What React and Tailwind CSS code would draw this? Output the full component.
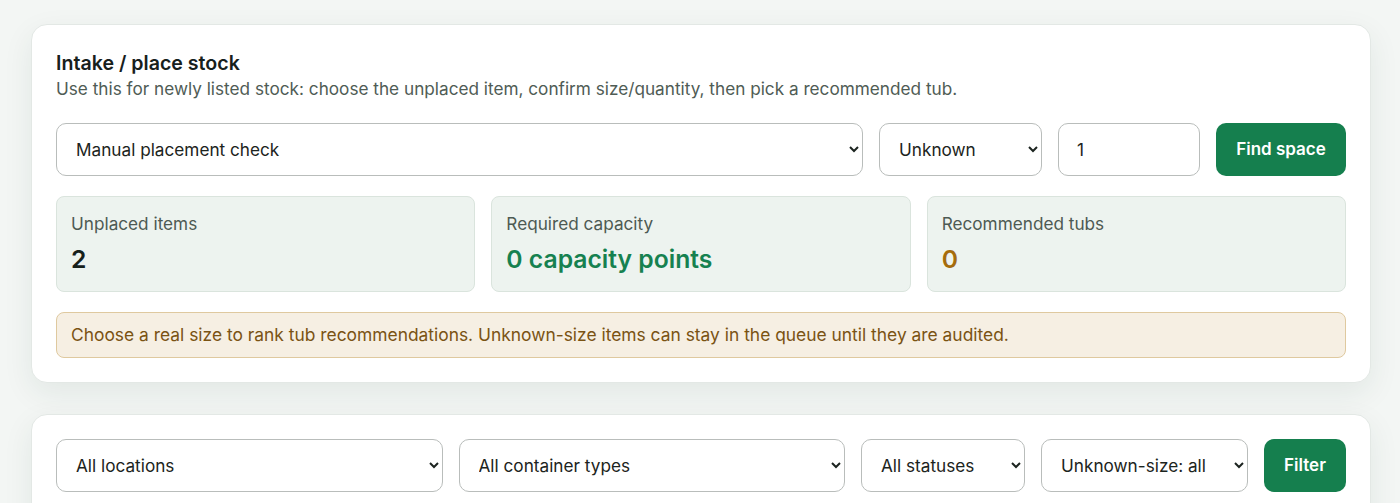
import React from 'react';

const fieldCls =
  "h-[53px] rounded-[10px] border border-[#b9bdbb] bg-white px-[15px] text-[17.2px] text-[#1c2420] outline-none";

const Stat = ({ label, value, valueCls }) => (
  <div className="flex-1 rounded-lg border border-[#dae4dd] bg-[#edf3ef] px-[14px] pt-[15px] pb-4">
    <div className="text-[17.2px] leading-6 text-[#4d5a53]">{label}</div>
    <div className={`mt-[7px] text-[24.7px] leading-8 font-semibold ${valueCls}`}>{value}</div>
  </div>
);

export default function App() {
  return (
    <div
      className="h-[503px] overflow-hidden bg-[#f3f6f4] pl-[31px] pr-[29px] pt-6"
      style={{ fontFamily: 'Inter, "Noto Sans", sans-serif' }}
    >
      {/* Intake card */}
      <section className="rounded-2xl border border-[#e3e8e5] bg-white p-6 shadow-[0_10px_30px_rgba(30,60,45,0.08)]">
        <h2 className="text-[19.6px] leading-7 font-semibold text-[#17201c]">Intake / place stock</h2>
        <p className="text-[17.2px] leading-6 text-[#4f5c55]">
          Use this for newly listed stock: choose the unplaced item, confirm size/quantity, then pick a recommended tub.
        </p>

        <div className="mt-[22px] flex gap-4">
          <select className={`${fieldCls} flex-1`} defaultValue="manual">
            <option value="manual">Manual placement check</option>
          </select>
          <select className={`${fieldCls} w-[163px]`} defaultValue="unknown">
            <option value="unknown">Unknown</option>
          </select>
          <input className={`${fieldCls} w-[142px] px-[18px]`} defaultValue="1" />
          <button className="h-[53px] w-[130px] rounded-[10px] bg-[#157f4e] text-[17px] font-semibold text-white">
            Find space
          </button>
        </div>

        <div className="mt-5 flex gap-4">
          <Stat label="Unplaced items" value="2" valueCls="text-[#16201b]" />
          <Stat label="Required capacity" value="0 capacity points" valueCls="text-[#168150]" />
          <Stat label="Recommended tubs" value="0" valueCls="text-[#a56c0c]" />
        </div>

        <div className="mt-5 rounded-lg border border-[#dfc99f] bg-[#f6efe3] px-[14px] py-[10px] text-[17.4px] leading-6 text-[#7a5313]">
          Choose a real size to rank tub recommendations. Unknown-size items can stay in the queue until they are audited.
        </div>
      </section>

      {/* Filter card */}
      <section className="mt-[31px] rounded-2xl border border-[#e3e8e5] bg-white p-6 shadow-[0_10px_30px_rgba(30,60,45,0.08)]">
        <div className="flex gap-4">
          <select className={`${fieldCls} flex-1`} defaultValue="all">
            <option value="all">All locations</option>
          </select>
          <select className={`${fieldCls} flex-1`} defaultValue="all">
            <option value="all">All container types</option>
          </select>
          <select className={`${fieldCls} w-[164px]`} defaultValue="all">
            <option value="all">All statuses</option>
          </select>
          <select className={`${fieldCls} w-[207px]`} defaultValue="all">
            <option value="all">Unknown-size: all</option>
          </select>
          <button className="h-[53px] w-[82px] rounded-[10px] bg-[#157f4e] text-[17px] font-semibold text-white">
            Filter
          </button>
        </div>
        <div className="h-10" />
      </section>
    </div>
  );
}
